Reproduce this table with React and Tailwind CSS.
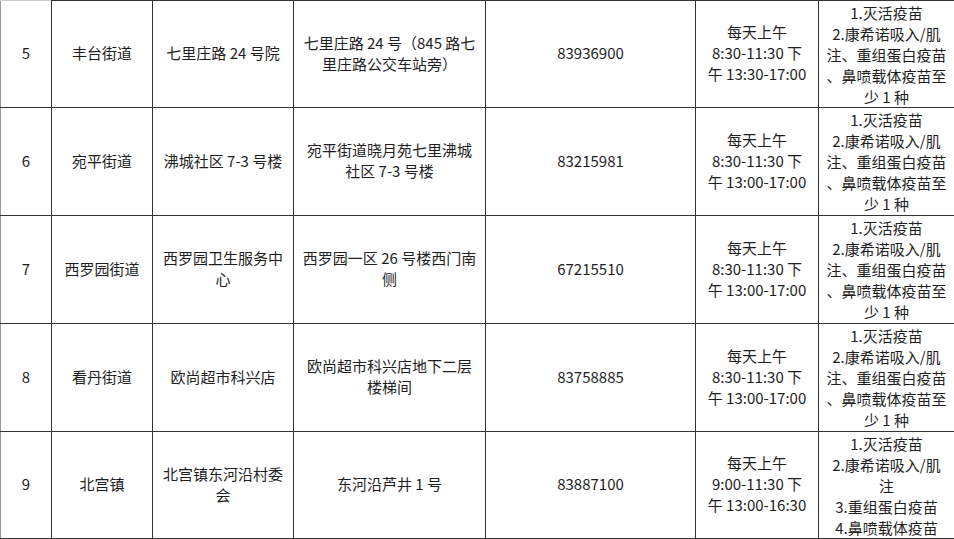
import React from 'react';

const ROWS = [
  {
    no: '5',
    street: '丰台街道',
    site: ['七里庄路 24 号院'],
    addr: ['七里庄路 24 号（845 路七', '里庄路公交车站旁）'],
    phone: '83936900',
    time: ['每天上午', '8:30-11:30 下', '午 13:30-17:00'],
    vax: ['1.灭活疫苗', '2.康希诺吸入/肌', '注、重组蛋白疫苗', '、鼻喷载体疫苗至', '少 1 种'],
  },
  {
    no: '6',
    street: '宛平街道',
    site: ['沸城社区 7-3 号楼'],
    addr: ['宛平街道晓月苑七里沸城', '社区 7-3 号楼'],
    phone: '83215981',
    time: ['每天上午', '8:30-11:30 下', '午 13:00-17:00'],
    vax: ['1.灭活疫苗', '2.康希诺吸入/肌', '注、重组蛋白疫苗', '、鼻喷载体疫苗至', '少 1 种'],
  },
  {
    no: '7',
    street: '西罗园街道',
    site: ['西罗园卫生服务中', '心'],
    addr: ['西罗园一区 26 号楼西门南', '侧'],
    phone: '67215510',
    time: ['每天上午', '8:30-11:30 下', '午 13:00-17:00'],
    vax: ['1.灭活疫苗', '2.康希诺吸入/肌', '注、重组蛋白疫苗', '、鼻喷载体疫苗至', '少 1 种'],
  },
  {
    no: '8',
    street: '看丹街道',
    site: ['欧尚超市科兴店'],
    addr: ['欧尚超市科兴店地下二层', '楼梯间'],
    phone: '83758885',
    time: ['每天上午', '8:30-11:30 下', '午 13:00-17:00'],
    vax: ['1.灭活疫苗', '2.康希诺吸入/肌', '注、重组蛋白疫苗', '、鼻喷载体疫苗至', '少 1 种'],
  },
  {
    no: '9',
    street: '北宫镇',
    site: ['北宫镇东河沿村委', '会'],
    addr: ['东河沿芦井 1 号'],
    phone: '83887100',
    time: ['每天上午', '9:00-11:30 下', '午 13:00-16:30'],
    vax: ['1.灭活疫苗', '2.康希诺吸入/肌', '注', '3.重组蛋白疫苗', '4.鼻喷载体疫苗'],
  },
];

function Lines({ items }) {
  return items.map((t, i) => (
    <div key={i} className="whitespace-nowrap">
      {t}
    </div>
  ));
}

export default function App() {
  const cell = 'border border-[#333] text-center align-middle px-0 pt-0 pb-[3px]';
  return (
    <div
      className="w-[954px] h-[539px] overflow-hidden bg-white text-[#1e1e1e] text-[15px] leading-[21px]"
      style={{ fontFamily: '"Noto Sans CJK SC", "Noto Sans", sans-serif' }}
    >
      <table className="table-fixed border-collapse w-[954px] border-l border-r border-b border-l-[#9a9a9a] border-r-[#777] border-b-[#9a9a9a]">
        <colgroup>
          <col className="w-[51px]" />
          <col className="w-[101px]" />
          <col className="w-[141px]" />
          <col className="w-[192px]" />
          <col className="w-[210px]" />
          <col className="w-[123px]" />
          <col className="w-[136px]" />
        </colgroup>
        <tbody>
          {ROWS.map((r, i) => (
            <tr key={r.no} className={i === 0 || i === 4 ? 'h-[107px]' : 'h-[108px]'}>
              <td className={`${cell} border-t-[#cfcfcf] border-l-[#9a9a9a]`}>{r.no}</td>
              <td className={cell}>{r.street}</td>
              <td className={cell}>
                <Lines items={r.site} />
              </td>
              <td className={cell}>
                <Lines items={r.addr} />
              </td>
              <td className={cell}>{r.phone}</td>
              <td className={cell}>
                <Lines items={r.time} />
              </td>
              <td className="border border-[#333] border-r-[#777] text-center align-middle p-0">
                <Lines items={r.vax} />
              </td>
            </tr>
          ))}
        </tbody>
      </table>
    </div>
  );
}
